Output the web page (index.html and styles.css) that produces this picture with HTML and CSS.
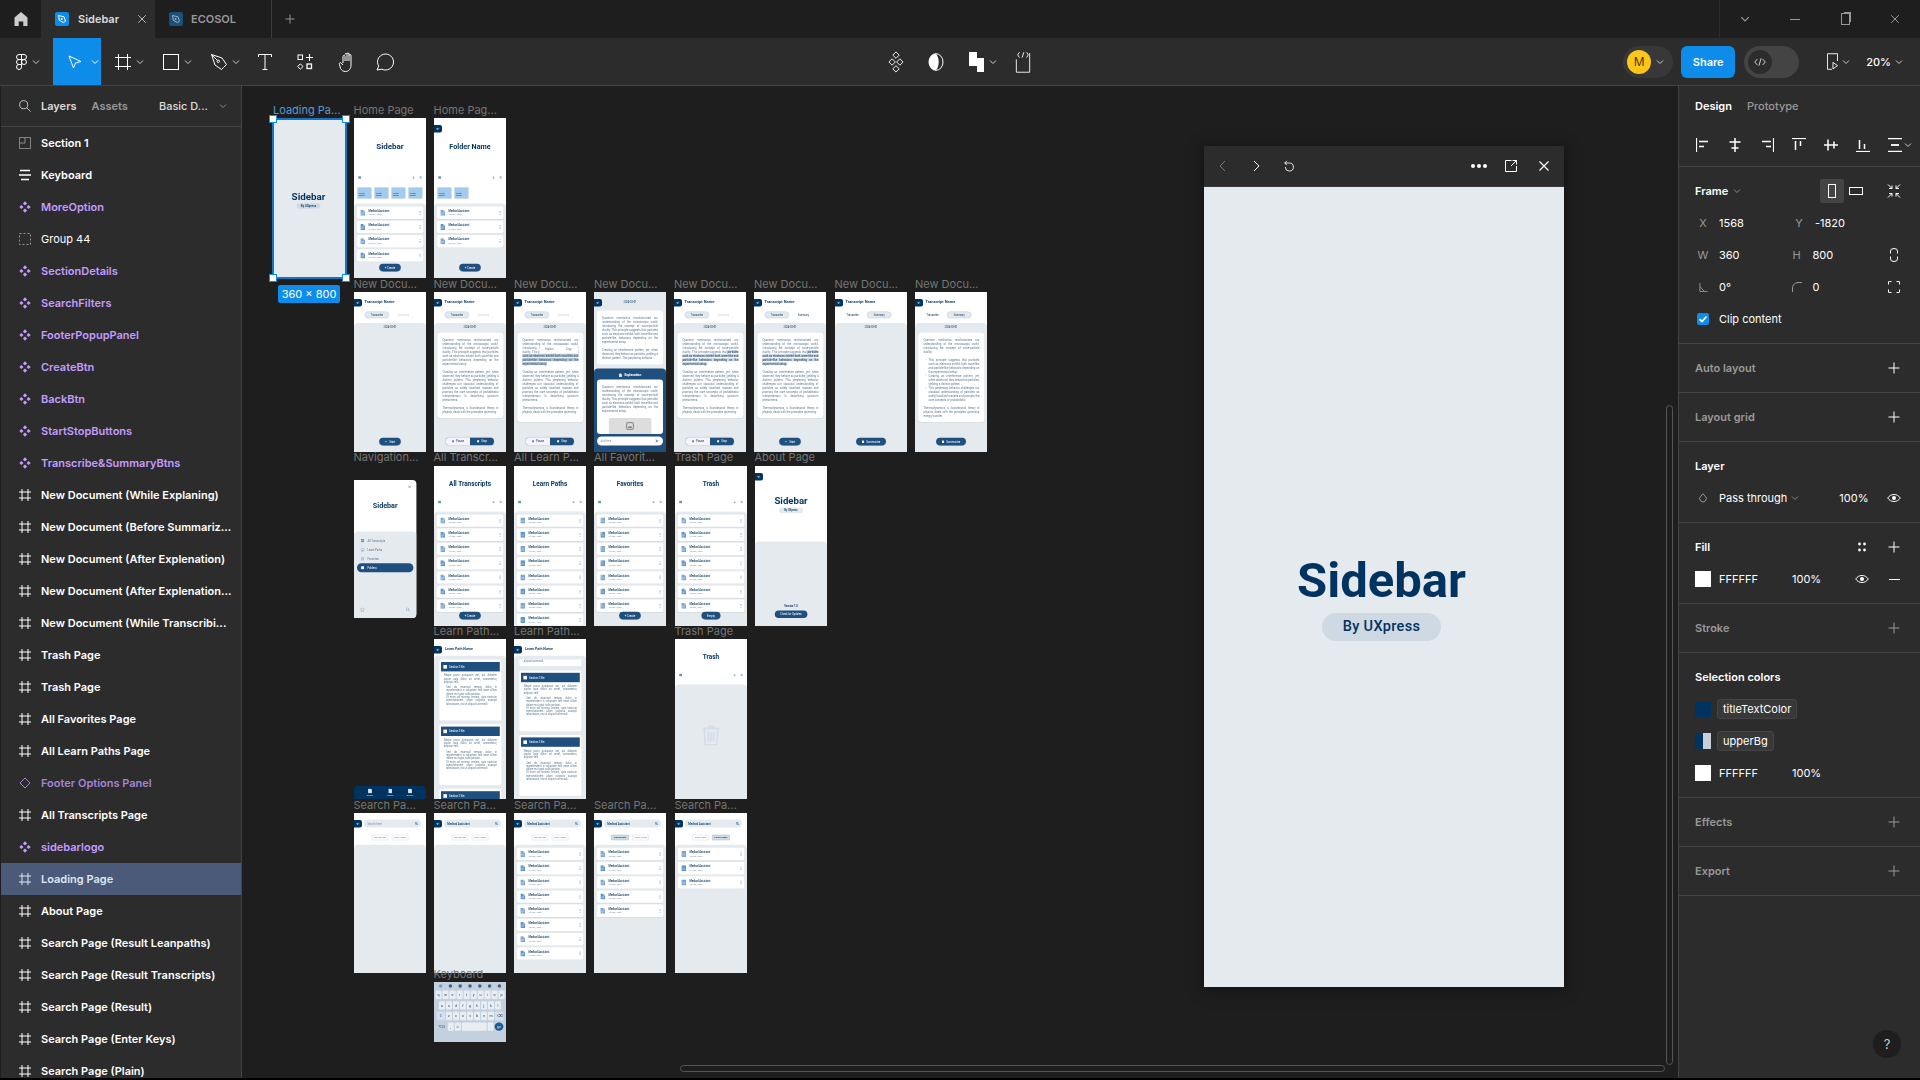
FILE: index.html
```html
<!DOCTYPE html>
<html lang="en">
<head>
  <meta charset="UTF-8">
  <title>Sidebar - Figma</title>
  <link rel="stylesheet" href="styles.css">
</head>
<body>
  <svg class="sprite" xmlns="http://www.w3.org/2000/svg">
    <symbol id="i-home" viewBox="0 0 16 16"><path d="M8 1 1.5 6.5V15h4.2v-4.5h4.6V15h4.2V6.5z" fill="currentColor"/></symbol>
    <symbol id="i-file" viewBox="0 0 14 14"><rect width="14" height="14" rx="2" fill="#0d8ce9"/><path d="M3.5 3.5 9 4.8l1.5 4.4-2.2 1.3-4-2.2z" fill="none" stroke="#fff"/><circle cx="6.6" cy="7" r="1" fill="#fff"/></symbol>
    <symbol id="i-file-dim" viewBox="0 0 14 14"><rect width="14" height="14" rx="2" fill="#1b5078"/><path d="M3.5 3.5 9 4.8l1.5 4.4-2.2 1.3-4-2.2z" fill="none" stroke="#9fb4c4"/><circle cx="6.6" cy="7" r="1" fill="#9fb4c4"/></symbol>
    <symbol id="i-x" viewBox="0 0 12 12"><path d="M1.5 1.5l9 9M10.5 1.5l-9 9" stroke="currentColor" stroke-width="1.2" fill="none"/></symbol>
    <symbol id="i-plus" viewBox="0 0 12 12"><path d="M6 .5v11M.5 6h11" stroke="currentColor" fill="none"/></symbol>
    <symbol id="i-chev" viewBox="0 0 8 8"><path d="M1 2.5 4 5.5 7 2.5" stroke="currentColor" fill="none"/></symbol>
    <symbol id="i-figma" viewBox="0 0 11 16"><path d="M5.500 .5H3a2.500 2.500 0 0 0 0 5h2.500zM5.500 .5H8a2.500 2.500 0 0 1 0 5H5.500zM5.500 5.500H3a2.500 2.500 0 0 0 0 5h2.500zM5.500 10.500H3a2.500 2.500 0 1 0 2.500 2.500z" fill="none" stroke="currentColor"/><circle cx="8" cy="8" r="2.500" fill="none" stroke="currentColor"/></symbol>
    <symbol id="i-move" viewBox="0 0 14 14"><path d="M1 1l12 5.500-5.500 1.500L5.500 13z" fill="none" stroke="currentColor"/></symbol>
    <symbol id="i-frame" viewBox="0 0 16 16"><path d="M3.500 0v16M12.500 0v16M0 3.500h16M0 12.500h16" fill="none" stroke="currentColor"/></symbol>
    <symbol id="i-rect" viewBox="0 0 16 16"><rect x=".5" y=".5" width="15" height="15" fill="none" stroke="currentColor"/></symbol>
    <symbol id="i-pen" viewBox="0 0 16 16"><path d="M.5 .5 11 4l4.500 6.500-3 3-2 2L4 11z" fill="none" stroke="currentColor"/><path d="M.5 .5 6.500 6.500" stroke="currentColor"/><circle cx="7.300" cy="7.300" r="1.200" fill="none" stroke="currentColor"/></symbol>
    <symbol id="i-text" viewBox="0 0 14 16"><path d="M.5 3V.5h13V3M7 .5v15M4.500 15.500h5" fill="none" stroke="currentColor"/></symbol>
    <symbol id="i-comps" viewBox="0 0 16 16"><rect x="1" y="1" width="4.500" height="4.500" fill="none" stroke="currentColor"/><path d="M12.500 0v7M9 3.500h7" stroke="currentColor"/><path d="M3.300 9.800 6 12.500l-2.700 2.700L.6 12.500z" fill="none" stroke="currentColor"/><rect x="10" y="10" width="4.500" height="4.500" fill="none" stroke="currentColor" stroke-width="1.300"/></symbol>
    <symbol id="i-hand" viewBox="0 0 18 20"><path d="M4.500 11V4.500a1 1 0 0 1 2 0V9m0-6.500a1 1 0 0 1 2 0V9m0-7a1 1 0 0 1 2 0v7m0-5.500a1 1 0 0 1 2 0V13c0 3.500-2 6.500-5.500 6.500-2.500 0-3.500-1-5-3L1 12.500c-.8-1.200.8-2.500 1.800-1.400L4.500 13" fill="none" stroke="currentColor" transform="translate(2.500 0)"/></symbol>
    <symbol id="i-comment" viewBox="0 0 18 18"><path d="M1 17l1.700-3.800A8 8 0 1 1 6 16.200z" fill="none" stroke="currentColor"/></symbol>
    <symbol id="i-diamonds" viewBox="0 0 16 24"><path d="M8 1l3.500 3.500L8 8 4.500 4.500zM8 16l3.500 3.500L8 23l-3.500-3.500zM3.800 8.500 7.300 12l-3.500 3.500L.3 12zM12.200 8.500l3.500 3.500-3.500 3.500L8.700 12z" fill="none" stroke="currentColor"/></symbol>
    <symbol id="i-mask" viewBox="0 0 16 18"><ellipse cx="8" cy="9" rx="7" ry="8.300" fill="none" stroke="currentColor"/><path d="M8 .7C4 .7 1 4.500 1 9s3 8.300 7 8.300c1.800-2 2.700-5 2.700-8.300S9.800 2.700 8 .7z" fill="currentColor"/></symbol>
    <symbol id="i-bool" viewBox="0 0 16 20"><path d="M1 0h8v6h7v14H9v-6H1z" fill="currentColor"/></symbol>
    <symbol id="i-dev" viewBox="0 0 18 24"><path d="M5 1 3 4l2 3M13 1l2 3-2 3M10 1 8 7" fill="none" stroke="currentColor"/><path d="M1.500 9v14.500h15V2" fill="none" stroke="currentColor"/></symbol>
    <symbol id="i-code" viewBox="0 0 16 12"><path d="M4.500 2 1 6l3.500 4M11.500 2 15 6l-3.500 4M9.500 1l-3 10" fill="none" stroke="currentColor"/></symbol>
    <symbol id="i-device" viewBox="0 0 12 18"><path d="M5.500 17.500H.5V.5h11v8" fill="none" stroke="currentColor"/><path d="M6.500 10v7l5-3.500z" fill="none" stroke="currentColor"/></symbol>
    <symbol id="i-search" viewBox="0 0 14 14"><circle cx="5.500" cy="5.500" r="4.700" fill="none" stroke="currentColor"/><path d="M9 9l4.500 4.500" stroke="currentColor"/></symbol>
    <symbol id="i-section" viewBox="0 0 14 14"><path d="M.5 .5h13v13H.5zM.5 7H7V.5" fill="none" stroke="currentColor"/></symbol>
    <symbol id="i-lines" viewBox="0 0 12 12"><path d="M1 1.500h10M0 6h12M2 10.500h8" stroke="currentColor" stroke-width="1.500" fill="none"/></symbol>
    <symbol id="i-comp" viewBox="0 0 12 12"><path d="M6 .3 8.100 2.400 6 4.500 3.900 2.400zM6 7.500l2.100 2.100L6 11.700 3.900 9.600zM2.400 3.900 4.500 6 2.400 8.100.3 6zM9.600 3.900 11.700 6 9.600 8.100 7.500 6z" fill="currentColor"/></symbol>
    <symbol id="i-compset" viewBox="0 0 12 12"><path d="M6 1l5 5-5 5-5-5z" fill="none" stroke="currentColor"/></symbol>
    <symbol id="i-group" viewBox="0 0 12 12"><rect x=".5" y=".5" width="11" height="11" fill="none" stroke="currentColor" stroke-dasharray="2 2"/></symbol>
    <symbol id="i-hash" viewBox="0 0 12 12"><path d="M3 0v12M9 0v12M0 3h12M0 9h12" fill="none" stroke="currentColor"/></symbol>
    <symbol id="i-prev" viewBox="0 0 10 12"><path d="M7 1 2 6l5 5" fill="none" stroke="currentColor"/></symbol>
    <symbol id="i-next" viewBox="0 0 10 12"><path d="M3 1l5 5-5 5" fill="none" stroke="currentColor"/></symbol>
    <symbol id="i-undo" viewBox="0 0 12 14"><path d="M3.500 1 1 3.500 3.500 6" fill="none" stroke="currentColor"/><path d="M1 3.500h5.500a4.700 4.700 0 1 1-4.800 4.700" fill="none" stroke="currentColor"/></symbol>
    <symbol id="i-open" viewBox="0 0 12 12"><path d="M6.500.5H.5v11h11V6M6 6 11.500 .5M7.500 .5h4v4" fill="none" stroke="currentColor"/></symbol>
    <symbol id="i-al" viewBox="0 0 14 14"><path d="M.5 0v14" fill="none" stroke="currentColor" stroke-width="1.200"/><path d="M3 3.500h9M3 8.500h5" stroke="currentColor" stroke-width="1.500"/></symbol>
    <symbol id="i-ac" viewBox="0 0 14 14"><path d="M7 0v14M1.500 4h11M3.500 10h7" fill="none" stroke="currentColor" stroke-width="1.500"/></symbol>
    <symbol id="i-ar" viewBox="0 0 14 14"><path d="M13.500 0v14" stroke="currentColor" stroke-width="1.200"/><path d="M2 3.500h9M6 8.500h5" stroke="currentColor" stroke-width="1.500"/></symbol>
    <symbol id="i-at" viewBox="0 0 14 14"><path d="M0 .5h14" stroke="currentColor" stroke-width="1.200"/><path d="M3.500 3v9M8.500 3v5" stroke="currentColor" stroke-width="1.500"/></symbol>
    <symbol id="i-am" viewBox="0 0 14 14"><path d="M0 7h14M4 1.500v11M10 3.500v7" stroke="currentColor" stroke-width="1.500"/></symbol>
    <symbol id="i-ab" viewBox="0 0 14 14"><path d="M0 13.500h14" stroke="currentColor" stroke-width="1.200"/><path d="M3.500 2v9M8.500 6v5" stroke="currentColor" stroke-width="1.500"/></symbol>
    <symbol id="i-dist" viewBox="0 0 14 14"><path d="M0 .7h14M0 13.300h14" stroke="currentColor" stroke-width="1.200"/><path d="M3 7h8" stroke="currentColor" stroke-width="1.800"/></symbol>
    <symbol id="i-fit" viewBox="0 0 14 14"><path d="M1 .5 5 4.500M5 1.500v3H2M13 .5 9 4.500M9 1.500v3h3M1 13.500l4-4M5 12.500v-3H2M13 13.500l-4-4M9 12.500v-3h3" fill="none" stroke="currentColor"/></symbol>
    <symbol id="i-angle" viewBox="0 0 10 10"><path d="M1 0v9.500h8.500M1 4l5 5.500" fill="none" stroke="currentColor"/></symbol>
    <symbol id="i-radius" viewBox="0 0 10 10"><path d="M.5 10V6C.5 3 3 .5 6 .5h4" fill="none" stroke="currentColor"/></symbol>
    <symbol id="i-link" viewBox="0 0 8 14"><path d="M.5 5.500V3a3.500 2.500 0 0 1 7 0v2.500M.5 8.500V11a3.500 2.500 0 0 0 7 0V8.500" fill="none" stroke="currentColor"/></symbol>
    <symbol id="i-corners" viewBox="0 0 12 12"><path d="M.5 3.500V1q0-.5.5-.5h2.500M8.500 .5H11q.5 0 .5.5v2.500M11.500 8.500V11q0 .5-.5.5H8.500M3.500 11.500H1q-.5 0-.5-.5V8.500" fill="none" stroke="currentColor"/></symbol>
    <symbol id="i-drop" viewBox="0 0 8 10"><path d="M4 .7 1.800 3.200a3.300 3.300 0 1 0 4.400 0z" fill="none" stroke="currentColor"/></symbol>
    <symbol id="i-eye" viewBox="0 0 14 8"><path d="M.7 4C2.500 1.500 4.500.5 7 .5s4.500 1 6.300 3.500C11.500 6.500 9.500 7.500 7 7.500S2.500 6.500.7 4z" fill="none" stroke="currentColor"/><circle cx="7" cy="4" r="2" fill="currentColor"/></symbol>
    <symbol id="i-styles" viewBox="0 0 10 10"><circle cx="2.500" cy="2" r="1.400" fill="currentColor"/><circle cx="7.500" cy="2" r="1.400" fill="currentColor"/><circle cx="2.500" cy="8" r="1.400" fill="currentColor"/><circle cx="7.500" cy="8" r="1.400" fill="currentColor"/></symbol>

    <symbol id="t-back" viewBox="0 0 16 16"><path d="M13 8H3M7.500 3.500 3 8l4.500 4.500" fill="none" stroke="currentColor" stroke-width="2"/></symbol>
    <symbol id="t-menu" viewBox="0 0 16 16"><path d="M1 2h14v3H1zM1 6.500h14v3H1zM1 11h14v3H1z" fill="currentColor"/></symbol>
    <symbol id="t-down" viewBox="0 0 16 16"><path d="M8 1v13M3 9l5 5 5-5" fill="none" stroke="currentColor" stroke-width="2"/></symbol>
    <symbol id="t-search" viewBox="0 0 16 16"><circle cx="6.500" cy="6.500" r="4.500" fill="none" stroke="currentColor" stroke-width="2"/><path d="M10 10l5 5" stroke="currentColor" stroke-width="2.500"/></symbol>
    <symbol id="t-doc" viewBox="0 0 24 30"><path d="M0 2q0-2 2-2h13l9 9v19q0 2-2 2H2q-2 0-2-2z" fill="currentColor"/><path d="M15 0v9h9z" fill="#d6e4f2"/><path d="M5 15h14M5 19h14M5 23h9" stroke="#fff" stroke-width="1.500"/></symbol>
    <symbol id="t-star" viewBox="0 0 24 30"><path d="M0 2q0-2 2-2h20q2 0 2 2v26q0 2-2 2H2q-2 0-2-2z" fill="currentColor"/><path d="M5 15h14M5 20h14" stroke="#fff" stroke-width="1.500"/><path d="M6 0l2 4 4 .6-3 3 .8 4.400L6 10l-3.800 2 .8-4.400-3-3 4-.6z" fill="#f5c542"/></symbol>
    <symbol id="t-book" viewBox="0 0 24 30"><path d="M0 2q0-2 2-2h20q2 0 2 2v26q0 2-2 2H2q-2 0-2-2z" fill="currentColor"/><path d="M5 15h14M5 20h14" stroke="#fff" stroke-width="1.500"/></symbol>
    <symbol id="t-trash" viewBox="0 0 92 105"><path d="M32 8h28M4 18h84M12 18l5 82h58l5-82M33 36v48M59 36v48M46 36v48" fill="none" stroke="currentColor" stroke-width="8"/></symbol>
    <symbol id="t-img" viewBox="0 0 24 24"><rect x="2" y="2" width="20" height="20" rx="2" fill="none" stroke="currentColor" stroke-width="2"/><path d="M6 17h12v-3H6z" fill="currentColor"/></symbol>
    <symbol id="t-send" viewBox="0 0 20 20"><path d="M2 2l16 8-16 8 3-8z" fill="currentColor"/></symbol>
    <symbol id="t-square" viewBox="0 0 16 16"><rect x="2" y="2" width="12" height="12" rx="1.500" fill="currentColor"/></symbol>
    <symbol id="t-pause" viewBox="0 0 16 16"><path d="M4 2h3v12H4zM9 2h3v12H9z" fill="currentColor"/></symbol>
    <symbol id="t-star-line" viewBox="0 0 16 16"><path d="M8 1l2.200 4.500 5 .7-3.600 3.500.9 5L8 12.300 3.500 14.700l.9-5L.8 6.200l5-.7z" fill="none" stroke="currentColor" stroke-width="1.500"/></symbol>
  </svg>

  <div class="app">
    <header class="titlebar">
      <div class="home-tab"><svg class="ico-16"><use href="#i-home"/></svg></div>
      <div class="tab tab-active">
        <svg class="ico-14"><use href="#i-file"/></svg>
        <span class="tab-name">Sidebar</span>
        <svg class="ico-10 tab-close"><use href="#i-x"/></svg>
      </div>
      <div class="tab">
        <svg class="ico-14"><use href="#i-file-dim"/></svg>
        <span class="tab-name tab-name-dim">ECOSOL</span>
      </div>
      <div class="tab-add"><svg class="ico-10"><use href="#i-plus"/></svg></div>
      <div class="win-controls">
        <svg class="ico-10 win-ico"><use href="#i-chev"/></svg>
        <span class="win-min"></span>
        <span class="win-restore"></span>
        <svg class="ico-10 win-ico"><use href="#i-x"/></svg>
      </div>
    </header>

    <div class="toolbar">
      <div class="tools">
        <button class="tool tool-main"><svg class="ico-logo"><use href="#i-figma"/></svg><svg class="ico-8"><use href="#i-chev"/></svg></button>
        <button class="tool tool-on"><svg class="ico-14"><use href="#i-move"/></svg><svg class="ico-8"><use href="#i-chev"/></svg></button>
        <button class="tool"><svg class="ico-16"><use href="#i-frame"/></svg><svg class="ico-8"><use href="#i-chev"/></svg></button>
        <button class="tool"><svg class="ico-16"><use href="#i-rect"/></svg><svg class="ico-8"><use href="#i-chev"/></svg></button>
        <button class="tool"><svg class="ico-16"><use href="#i-pen"/></svg><svg class="ico-8"><use href="#i-chev"/></svg></button>
        <button class="tool tool-plain"><svg class="ico-16"><use href="#i-text"/></svg></button>
        <button class="tool tool-plain"><svg class="ico-16"><use href="#i-comps"/></svg></button>
        <button class="tool tool-plain"><svg class="ico-20"><use href="#i-hand"/></svg></button>
        <button class="tool tool-plain"><svg class="ico-18"><use href="#i-comment"/></svg></button>
      </div>
      <div class="tools-mid">
        <svg class="ico-mid"><use href="#i-diamonds"/></svg>
        <svg class="ico-mid"><use href="#i-mask"/></svg>
        <span class="mid-bool"><svg class="ico-mid"><use href="#i-bool"/></svg><svg class="ico-8"><use href="#i-chev"/></svg></span>
        <svg class="ico-mid"><use href="#i-dev"/></svg>
      </div>
      <div class="tools-right">
        <div class="avatar-pill"><span class="avatar">M</span><svg class="ico-8"><use href="#i-chev"/></svg></div>
        <button class="share">Share</button>
        <div class="dev-toggle"><span class="dev-knob"><svg class="ico-12"><use href="#i-code"/></svg></span></div>
        <div class="device"><svg class="ico-device"><use href="#i-device"/></svg><svg class="ico-8"><use href="#i-chev"/></svg></div>
        <div class="zoom-level">20%<svg class="ico-8"><use href="#i-chev"/></svg></div>
      </div>
    </div>

    <main class="workspace">
      <aside class="layers">
        <div class="layers-head">
          <svg class="ico-12 layers-search"><use href="#i-search"/></svg>
          <span class="layers-tab">Layers</span>
          <span class="layers-tab layers-tab-dim">Assets</span>
          <span class="layers-page">Basic D...</span>
          <svg class="ico-8 layers-chev"><use href="#i-chev"/></svg>
        </div>
        <ul class="layer-list">
          <li class="layer"><svg class="layer-ico dim"><use href="#i-section"/></svg>Section 1</li>
          <li class="layer"><svg class="layer-ico"><use href="#i-lines"/></svg>Keyboard</li>
          <li class="layer comp"><svg class="layer-ico"><use href="#i-comp"/></svg>MoreOption</li>
          <li class="layer layer-light"><svg class="layer-ico dim"><use href="#i-group"/></svg>Group 44</li>
          <li class="layer comp"><svg class="layer-ico"><use href="#i-comp"/></svg>SectionDetails</li>
          <li class="layer comp"><svg class="layer-ico"><use href="#i-comp"/></svg>SearchFilters</li>
          <li class="layer comp"><svg class="layer-ico"><use href="#i-comp"/></svg>FooterPopupPanel</li>
          <li class="layer comp"><svg class="layer-ico"><use href="#i-comp"/></svg>CreateBtn</li>
          <li class="layer comp"><svg class="layer-ico"><use href="#i-comp"/></svg>BackBtn</li>
          <li class="layer comp"><svg class="layer-ico"><use href="#i-comp"/></svg>StartStopButtons</li>
          <li class="layer comp"><svg class="layer-ico"><use href="#i-comp"/></svg>Transcribe&amp;SummaryBtns</li>
          <li class="layer"><svg class="layer-ico"><use href="#i-hash"/></svg>New Document (While Explaning)</li>
          <li class="layer"><svg class="layer-ico"><use href="#i-hash"/></svg>New Document (Before Summariz...</li>
          <li class="layer"><svg class="layer-ico"><use href="#i-hash"/></svg>New Document (After Explenation)</li>
          <li class="layer"><svg class="layer-ico"><use href="#i-hash"/></svg>New Document (After Explenation...</li>
          <li class="layer"><svg class="layer-ico"><use href="#i-hash"/></svg>New Document (While Transcribi...</li>
          <li class="layer"><svg class="layer-ico"><use href="#i-hash"/></svg>Trash Page</li>
          <li class="layer"><svg class="layer-ico"><use href="#i-hash"/></svg>Trash Page</li>
          <li class="layer"><svg class="layer-ico"><use href="#i-hash"/></svg>All Favorites Page</li>
          <li class="layer"><svg class="layer-ico"><use href="#i-hash"/></svg>All Learn Paths Page</li>
          <li class="layer comp comp-set"><svg class="layer-ico"><use href="#i-compset"/></svg>Footer Options Panel</li>
          <li class="layer"><svg class="layer-ico"><use href="#i-hash"/></svg>All Transcripts Page</li>
          <li class="layer comp"><svg class="layer-ico"><use href="#i-comp"/></svg>sidebarlogo</li>
          <li class="layer layer-selected"><svg class="layer-ico"><use href="#i-hash"/></svg>Loading Page</li>
          <li class="layer"><svg class="layer-ico"><use href="#i-hash"/></svg>About Page</li>
          <li class="layer"><svg class="layer-ico"><use href="#i-hash"/></svg>Search Page (Result Leanpaths)</li>
          <li class="layer"><svg class="layer-ico"><use href="#i-hash"/></svg>Search Page (Result Transcripts)</li>
          <li class="layer"><svg class="layer-ico"><use href="#i-hash"/></svg>Search Page (Result)</li>
          <li class="layer"><svg class="layer-ico"><use href="#i-hash"/></svg>Search Page (Enter Keys)</li>
          <li class="layer"><svg class="layer-ico"><use href="#i-hash"/></svg>Search Page (Plain)</li>
        </ul>
      </aside>

      <section class="canvas" id="canvas">
        <!-- thumbnails get added here by script.js -->
        <div class="selection">
          <span class="handle handle-tl"></span>
          <span class="handle handle-tr"></span>
          <span class="handle handle-bl"></span>
          <span class="handle handle-br"></span>
          <span class="size-badge">360 × 800</span>
        </div>

        <div class="preview">
          <div class="preview-bar">
            <svg class="ico-12 preview-prev"><use href="#i-prev"/></svg>
            <svg class="ico-12"><use href="#i-next"/></svg>
            <svg class="ico-12"><use href="#i-undo"/></svg>
            <span class="preview-dots"><i></i><i></i><i></i></span>
            <svg class="ico-12"><use href="#i-open"/></svg>
            <svg class="ico-12"><use href="#i-x"/></svg>
          </div>
          <div class="preview-body">
            <div class="logo-title">Sidebar</div>
            <div class="logo-pill">By UXpress</div>
          </div>
        </div>

        <div class="scroll-x"></div>
        <div class="scroll-y"></div>
      </section>

      <aside class="props">
        <div class="props-tabs">
          <span class="props-tab">Design</span>
          <span class="props-tab props-tab-dim">Prototype</span>
        </div>
        <div class="align-row">
          <span class="cell"><svg class="ico-14"><use href="#i-al"/></svg></span>
          <span class="cell"><svg class="ico-14"><use href="#i-ac"/></svg></span>
          <span class="cell"><svg class="ico-14"><use href="#i-ar"/></svg></span>
          <span class="cell"><svg class="ico-14"><use href="#i-at"/></svg></span>
          <span class="cell"><svg class="ico-14"><use href="#i-am"/></svg></span>
          <span class="cell"><svg class="ico-14"><use href="#i-ab"/></svg></span>
          <span class="cell"><svg class="ico-14"><use href="#i-dist"/></svg><svg class="ico-8 dist-chev"><use href="#i-chev"/></svg></span>
        </div>

        <section class="panel panel-first">
          <div class="row">
            <span class="panel-title">Frame</span>
            <svg class="ico-8 frame-chev"><use href="#i-chev"/></svg>
            <span class="orient orient-on"><span class="orient-port"></span></span>
            <span class="orient"><span class="orient-land"></span></span>
            <span class="cell cell-end"><svg class="ico-14"><use href="#i-fit"/></svg></span>
          </div>
          <div class="row row-props">
            <span class="prop"><span class="prop-key">X</span>1568</span>
            <span class="prop"><span class="prop-key">Y</span>-1820</span>
          </div>
          <div class="row row-props">
            <span class="prop"><span class="prop-key">W</span>360</span>
            <span class="prop"><span class="prop-key">H</span>800</span>
            <span class="cell cell-end"><svg class="ico-14"><use href="#i-link"/></svg></span>
          </div>
          <div class="row row-props">
            <span class="prop"><span class="prop-key"><svg class="ico-8-plain"><use href="#i-angle"/></svg></span>0°</span>
            <span class="prop"><span class="prop-key"><svg class="ico-10"><use href="#i-radius"/></svg></span>0</span>
            <span class="cell cell-end"><svg class="ico-12"><use href="#i-corners"/></svg></span>
          </div>
          <div class="row row-clip">
            <span class="check"><svg viewBox="0 0 12 12"><path d="M2.500 6.200 5 8.500l4.500-5" fill="none" stroke="#fff" stroke-width="1.800"/></svg></span>
            Clip content
          </div>
        </section>

        <section class="panel">
          <div class="row"><span class="panel-title panel-title-dim">Auto layout</span><span class="cell cell-end"><svg class="ico-12"><use href="#i-plus"/></svg></span></div>
        </section>
        <section class="panel">
          <div class="row"><span class="panel-title panel-title-dim">Layout grid</span><span class="cell cell-end"><svg class="ico-12"><use href="#i-plus"/></svg></span></div>
        </section>
        <section class="panel">
          <div class="row"><span class="panel-title">Layer</span></div>
          <div class="row row-props">
            <span class="prop-key"><svg class="ico-10"><use href="#i-drop"/></svg></span>
            <span>Pass through</span>
            <svg class="ico-8 layer-chev"><use href="#i-chev"/></svg>
            <span class="layer-opacity">100%</span>
            <span class="cell cell-end"><svg class="ico-eye"><use href="#i-eye"/></svg></span>
          </div>
        </section>
        <section class="panel">
          <div class="row">
            <span class="panel-title">Fill</span>
            <span class="cell cell-auto"><svg class="ico-10"><use href="#i-styles"/></svg></span>
            <span class="cell"><svg class="ico-12"><use href="#i-plus"/></svg></span>
          </div>
          <div class="row">
            <span class="swatch"></span>
            <span class="hex">FFFFFF</span>
            <span class="pct">100%</span>
            <span class="cell cell-auto"><svg class="ico-eye"><use href="#i-eye"/></svg></span>
            <span class="cell"><span class="minus"></span></span>
          </div>
        </section>
        <section class="panel">
          <div class="row"><span class="panel-title panel-title-dim">Stroke</span><span class="cell cell-end"><svg class="ico-12 dim"><use href="#i-plus"/></svg></span></div>
        </section>
        <section class="panel">
          <div class="row"><span class="panel-title">Selection colors</span></div>
          <div class="row">
            <span class="swatch swatch-navy"></span>
            <span class="style-chip">titleTextColor</span>
          </div>
          <div class="row">
            <span class="swatch swatch-half"></span>
            <span class="style-chip">upperBg</span>
          </div>
          <div class="row">
            <span class="swatch"></span>
            <span class="hex">FFFFFF</span>
            <span class="pct">100%</span>
          </div>
        </section>
        <section class="panel">
          <div class="row"><span class="panel-title panel-title-dim">Effects</span><span class="cell cell-end"><svg class="ico-12 dim"><use href="#i-plus"/></svg></span></div>
        </section>
        <section class="panel">
          <div class="row"><span class="panel-title panel-title-dim">Export</span><span class="cell cell-end"><svg class="ico-12 dim"><use href="#i-plus"/></svg></span></div>
        </section>
        <div class="help">?</div>
      </aside>
    </main>
  </div>

  <script src="script.js"></script>
</body>
</html>
```
FILE: styles.css
```css
* { box-sizing: border-box; }
html, body { margin: 0; height: 100%; background: #000; overflow: hidden; }
body { font-family: Inter, "Noto Sans", sans-serif; font-size: 11px; color: #fff; }
ul { list-style: none; margin: 0; padding: 0; }
button { font: inherit; color: inherit; border: 0; background: none; padding: 0; }
svg { display: block; flex: none; }
.sprite { position: absolute; width: 0; height: 0; }

.ico-8 { width: 8px; height: 8px; color: #ccc; }
.ico-8-plain { width: 9px; height: 9px; }
.ico-10 { width: 10px; height: 10px; }
.ico-12 { width: 12px; height: 12px; }
.ico-14 { width: 14px; height: 14px; }
.ico-16 { width: 16px; height: 16px; }
.ico-18 { width: 18px; height: 18px; }
.ico-20 { width: 18px; height: 20px; }
.ico-logo { width: 11px; height: 16px; }
.ico-mid { width: 16px; height: 22px; }
.ico-device { width: 11px; height: 17px; }
.ico-eye { width: 14px; height: 8px; }
.dim { color: #999; }

.app { height: 1078px; display: flex; flex-direction: column; }

/* title bar */
.titlebar { height: 38px; background: #1e1e1e; display: flex; align-items: stretch; flex: none; }
.home-tab { width: 41px; display: flex; align-items: center; justify-content: center; color: #ccc; }
.tab { width: 117px; padding-left: 14px; display: flex; align-items: center; gap: 8px; border-right: 1px solid #3a3a3a; }
.tab-active { width: 114px; background: #2c2c2c; border-right: 0; gap: 9px; }
.tab-name { font-size: 11px; font-weight: 600; color: #ddd; }
.tab-name-dim { color: #999; }
.tab-close { margin-left: 9px; color: #bbb; }
.tab-add { width: 36px; display: flex; align-items: center; justify-content: center; color: #aaa; }
.win-controls { margin-left: auto; width: 201px; border-left: 1px solid #2c2c2c; display: flex; align-items: center; justify-content: space-between; padding: 0 20px; color: #999; }
.win-min { width: 10px; height: 1px; background: #999; }
.win-restore { width: 9px; height: 12px; border: 1px solid #999; box-shadow: 2px -2px 0 -1px #999; }

/* tool bar */
.toolbar { height: 48px; background: #2c2c2c; border-bottom: 1px solid #444; display: flex; flex: none; position: relative; }
.tools { display: flex; }
.tool { width: 48px; height: 47px; display: flex; align-items: center; gap: 5px; padding-left: 14px; }
.tool-main { width: 53px; padding-left: 16px; }
.tool-on { background: #0d8ce9; padding-left: 15px; gap: 9px; color: #fff; }
.tool-on .ico-8 { color: #fff; }
.tool-plain { width: 40px; padding: 0; justify-content: center; }
.tools-mid { margin-left: 483px; display: flex; align-items: center; gap: 24px; }
.mid-bool { display: flex; align-items: center; gap: 5px; margin-right: -6px; }
.tools-right { margin-left: auto; display: flex; align-items: center; padding-right: 17px; }
.avatar-pill { width: 50px; height: 32px; background: #383838; border-radius: 16px; display: flex; align-items: center; gap: 5px; padding-left: 4px; }
.avatar { width: 24px; height: 24px; border-radius: 50%; background: #ffc61a; color: #4a3a00; font-size: 12px; display: flex; align-items: center; justify-content: center; }
.share { width: 54px; height: 32px; margin-left: 8px; background: #0d8ce9; border-radius: 6px; font-size: 11px; font-weight: 600; }
.dev-toggle { width: 55px; height: 32px; margin-left: 9px; background: #444; border-radius: 16px; padding: 4px; }
.dev-knob { width: 24px; height: 24px; border-radius: 50%; background: #2c2c2c; display: flex; align-items: center; justify-content: center; }
.device { display: flex; align-items: center; gap: 4px; margin-left: 28px; }
.zoom-level { display: flex; align-items: center; gap: 4px; margin-left: 16px; font-weight: 500; }

/* main area */
.workspace { flex: 1; display: flex; min-height: 0; }

.layers { width: 242px; flex: none; background: #2c2c2c; border-left: 1px solid #1e1e1e; border-right: 1px solid #444; overflow: hidden; }
.layers-head { height: 41px; border-bottom: 1px solid #444; display: flex; align-items: center; padding-left: 18px; color: #ddd; }
.layers-tab { font-weight: 600; margin-left: 10px; }
.layers-tab-dim { color: #999; margin-left: 15px; }
.layers-page { margin-left: 31px; font-weight: 500; }
.layers-chev { margin-left: 11px; color: #888; }
.layer { height: 32px; display: flex; align-items: center; padding-left: 18px; font-weight: 600; white-space: nowrap; color: #fff; }
.layer-light { font-weight: 400; }
.layer-ico { width: 12px; height: 12px; margin-right: 10px; }
.comp { color: #c49cff; }
.comp-set { color: #a583d8; }
.layer-selected { background: #4a5a78; color: #dfe6f2; }

.canvas { flex: 1; background: #1e1e1e; position: relative; overflow: hidden; }
.label { position: absolute; width: 80px; font-size: 11px; line-height: 14px; color: #757575; white-space: nowrap; }
.label-on { color: #5a9ad0; }

.selection { position: absolute; left: 30px; top: 32px; width: 75px; height: 161px; border: 2px solid #1577c4; }
.handle { position: absolute; width: 8px; height: 8px; background: #fff; border: 1px solid #0d8ce9; }
.handle-tl { left: -5px; top: -5px; }
.handle-tr { right: -5px; top: -5px; }
.handle-bl { left: -5px; bottom: -5px; }
.handle-br { right: -5px; bottom: -5px; }
.size-badge { position: absolute; left: 4px; top: 165px; width: 62px; height: 18px; border-radius: 2px; background: #0d8ce9; color: #fff; font-size: 11px; line-height: 18px; text-align: center; white-space: nowrap; }

.preview { position: absolute; left: 962px; top: 60px; width: 360px; height: 841px; box-shadow: 0 2px 14px rgba(0,0,0,.5); }
.preview-bar { height: 41px; background: #2c2c2c; display: flex; align-items: center; gap: 21px; padding: 0 14px 0 13px; border-bottom: 1px solid #3a3a3a; }
.preview-prev { color: #777; }
.preview-dots { margin-left: auto; margin-right: -3px; display: flex; gap: 2px; }
.preview-dots i { width: 4px; height: 4px; background: #fff; border-radius: 50%; }
.preview-body { height: 800px; background: #e5eaef; display: flex; flex-direction: column; align-items: center; justify-content: center; padding: 18px 5px 0 0; }
.logo-title { font: 700 49px/58px Roboto, sans-serif; color: #00335f; }
.logo-pill { width: 119px; height: 28px; margin-top: 3px; border-radius: 14px; background: #cfd9e3; color: #00335f; font: 500 14.500px/28px Roboto, sans-serif; letter-spacing: .3px; text-align: center; }

.scroll-x { position: absolute; left: 438px; top: 979px; width: 985px; height: 7px; border: 1px solid #555; border-radius: 4px; }
.scroll-y { position: absolute; left: 1424px; top: 319px; width: 7px; height: 660px; border: 1px solid #555; border-radius: 4px; }

/* right panel */
.props { width: 242px; flex: none; background: #2c2c2c; border-left: 1px solid #444; position: relative; overflow: hidden; }
.props-tabs { height: 32px; padding: 8px 0 0 16px; display: flex; gap: 15px; line-height: 24px; }
.props-tab { font-weight: 600; }
.props-tab-dim { font-weight: 500; color: #999; }
.align-row { height: 49px; padding: 6px 0 0 8px; display: flex; align-items: center; border-bottom: 1px solid #444; }
.cell { width: 32px; height: 32px; display: flex; align-items: center; justify-content: center; flex: none; }
.cell-end { margin-left: auto; }
.cell-auto { margin-left: auto; }
.dist-chev { position: absolute; right: 8px; }
.panel { padding: 8px 10px 8px 16px; border-bottom: 1px solid #444; }
.row { height: 32px; display: flex; align-items: center; }
.row-props { margin-left: -4px; }
.panel-title { font-weight: 600; }
.panel-title-dim { color: #999; }
.frame-chev { margin-left: 5px; color: #888; }
.orient { width: 24px; height: 24px; border-radius: 2px; display: flex; align-items: center; justify-content: center; }
.orient-on { background: #444; margin-left: 79px; }
.orient-port { width: 8px; height: 14px; border: 1px solid #fff; }
.orient-land { width: 14px; height: 8px; border: 1px solid #fff; }
.prop { width: 96px; display: flex; align-items: center; }
.prop-key { width: 24px; margin-right: 4px; color: #999; display: flex; justify-content: center; }
.row-clip { gap: 10px; padding-left: 2px; }
.check { width: 12px; height: 12px; background: #0d8ce9; border-radius: 2px; }
.layer-chev { margin-left: 4px; color: #888; }
.layer-opacity { margin-left: 40px; }
.swatch { width: 16px; height: 16px; background: #fff; flex: none; }
.swatch-navy { background: #00335f; }
.swatch-half { background: linear-gradient(90deg, #00335f 50%, #c8cfd6 50%); }
.hex { margin-left: 8px; width: 73px; }
.minus { width: 11px; height: 1px; background: #fff; }
.style-chip { margin-left: 6px; height: 20px; line-height: 18px; padding: 0 5px; border: 1px solid #444; border-radius: 3px; background: #383838; }
.help { position: absolute; left: 194px; top: 944px; width: 28px; height: 28px; border-radius: 50%; background: #1e1e1e; text-align: center; line-height: 28px; font-size: 13px; color: #ccc; }

/* thumbnails: drawn at 360 wide, shown at 20% */
.thumb { position: absolute; width: 360px; height: 800px; background: #fff; overflow: hidden; transform: scale(.2); transform-origin: 0 0; filter: blur(1.200px); font-family: Roboto, sans-serif; color: #00335f; display: flex; flex-direction: column; }
.thumb-grey { background: #e5eaef; }
.back { position: absolute; left: 0; top: 35px; width: 40px; height: 37px; background: #00335f; color: #fff; border-radius: 0 10px 10px 0; display: flex; align-items: center; justify-content: center; z-index: 2; }
.back svg { width: 20px; height: 20px; }
.big-title { font-weight: 700; text-align: center; flex: none; }
.home-title { height: 280px; padding-top: 120px; font-size: 40px; line-height: 46px; }
.home-title-sm { font-size: 36px; }
.list-title { height: 163px; padding-top: 67px; font-size: 32px; line-height: 46px; }
.list-bar { height: 34px; padding: 0 18px 0 20px; display: flex; align-items: center; gap: 20px; color: #3f6b97; flex: none; }
.list-bar svg { width: 16px; height: 16px; }
.list-bar svg:first-child { margin-right: auto; }
.folders { display: flex; gap: 17px; padding: 33px 18px 26px; flex: none; }
.folder { width: 68px; height: 55px; background: #a3caef; border-radius: 4px; box-shadow: 0 2px 4px rgba(0,0,0,.12); font-size: 11px; line-height: 12px; padding: 24px 6px 0; }
.sheet { flex: 1; background: #e5eaef; border-radius: 20px 20px 0 0; padding: 15px 13px; display: flex; flex-direction: column; gap: 9px; overflow: hidden; }
.sheet-gap { margin-top: 30px; }
.sheet-path { outline: 6px solid #e9f2fb; outline-offset: -6px; }
.card { height: 62px; flex: none; background: #fff; border-radius: 8px; display: flex; align-items: center; padding: 0 15px 0 19px; gap: 16px; box-shadow: 0 2px 4px rgba(0,0,0,.06); }
.card-ico { width: 24px; height: 30px; color: #7aa5d2; }
.card-ico-dark { color: #5f94c9; }
.card-text { flex: 1; display: flex; flex-direction: column; gap: 3px; }
.card-text b { font-size: 13px; line-height: 16px; font-weight: 500; }
.card-text span { font-size: 11px; line-height: 13px; color: #7d92a6; }
.kebab { display: flex; flex-direction: column; gap: 3px; }
.kebab i { width: 4px; height: 4px; border-radius: 50%; background: #00335f; }

.action { position: absolute; left: 50%; bottom: 33px; transform: translateX(-50%); height: 38px; padding: 0 28px; border-radius: 19px; background: #1f4f7f; color: #fff; font-size: 14px; line-height: 38px; white-space: nowrap; box-shadow: 0 2px 4px rgba(0,0,0,.2); display: flex; align-items: center; gap: 8px; }
.action svg { width: 14px; height: 14px; }
.split { position: absolute; left: 57px; bottom: 33px; width: 243px; height: 40px; display: flex; border-radius: 20px; overflow: hidden; box-shadow: 0 1px 4px rgba(0,0,0,.25); font-size: 14px; }
.split span { flex: 1; display: flex; align-items: center; justify-content: center; gap: 8px; }
.split svg { width: 14px; height: 14px; }
.split-pause { background: #f6f1fb; border: 2px solid #90a8c0; border-right: 0; border-radius: 20px 0 0 20px; }
.split-stop { background: #1f4f7f; color: #fff; }

.doc-title { height: 98px; padding: 35px 0 0 52px; font-size: 20px; font-weight: 600; line-height: 30px; flex: none; }
.tabs { height: 33px; padding-left: 53px; display: flex; gap: 37px; font-size: 13px; align-items: center; flex: none; }
.tab-pill { width: 122px; height: 33px; border-radius: 17px; background: #e5eaef; border: 2px solid #a9bdd1; text-align: center; line-height: 29px; }
.tab-plain { width: 70px; text-align: center; }
.tab-faded { color: #c4d0db; }
.doc-sheet { flex: 1; margin-top: 24px; background: #e5eaef; border-radius: 20px 20px 0 0; padding-top: 10px; overflow: hidden; }
.doc-date { text-align: center; font-size: 13px; line-height: 24px; }
.paper { margin: 13px 13px 0 17px; padding: 26px 25px 22px; background: #fff; border-radius: 16px; font-size: 14px; line-height: 20px; color: #5f7a92; text-align: justify; box-shadow: 0 2px 4px rgba(0,0,0,.05); position: relative; }
.paper p { margin: 0 0 20px; }
.paper p:last-child { margin-bottom: 0; }
.paper ul { margin: 0 0 20px 14px; padding-left: 12px; list-style: disc; }
.paper mark { background: #b4c4d6; color: #3c5870; }
.paper .strong { background: #d3dce6; color: #33506c; font-weight: 500; }
.popover { position: absolute; left: 110px; top: 64px; width: 195px; height: 42px; background: #fff; border-radius: 6px; box-shadow: 0 1px 6px rgba(0,0,0,.3); display: flex; align-items: center; font-size: 13px; }
.popover span { flex: 1; text-align: center; }

.expl-date { height: 93px; padding-top: 38px; text-align: center; font-size: 13px; line-height: 24px; flex: none; }
.expl-top { margin: 0 15px; height: 269px; overflow: hidden; background: #fff; border-radius: 16px; padding: 26px 25px; font-size: 14px; line-height: 20px; color: #5f7a92; text-align: justify; flex: none; }
.expl-top p { margin: 0 0 20px; }
.expl-panel { margin-top: 20px; flex: 1; background: #1f4f7f; border-radius: 20px 20px 0 0; padding-top: 12px; }
.expl-head { height: 43px; color: #fff; font-size: 16px; font-weight: 700; display: flex; align-items: center; justify-content: center; gap: 12px; }
.expl-head svg { width: 16px; height: 20px; color: #cfe0f0; }
.expl-body { margin: 0 15px; height: 273px; background: #fff; border-radius: 16px; padding: 26px 25px 0; font-size: 14px; line-height: 20px; color: #5f7a92; text-align: justify; display: flex; flex-direction: column; }
.expl-img { margin: auto auto 0; width: 213px; height: 80px; flex: none; background: #ddd; border-radius: 8px 8px 0 0; display: flex; align-items: center; justify-content: center; color: #555; }
.expl-img svg { width: 40px; height: 40px; }
.ask { margin: 12px 15px 0; height: 46px; border-radius: 23px; background: #fff; padding: 0 18px; font-size: 13px; color: #8298ac; display: flex; align-items: center; justify-content: space-between; }
.ask svg { width: 22px; height: 22px; color: #7d98b3; }

.about-head { height: 378px; flex: none; }
.about-title { padding-top: 146px; font-size: 48px; line-height: 58px; }
.about-pill { margin: 4px auto 0; width: 119px; height: 28px; border-radius: 14px; background: #e5eaef; font-size: 13px; line-height: 28px; text-align: center; font-weight: 500; }
.about-sheet { flex: 1; background: #e5eaef; border-radius: 20px 20px 0 0; display: flex; flex-direction: column; align-items: center; justify-content: flex-end; padding-bottom: 40px; font-size: 13px; font-weight: 700; }
.about-btn { margin-top: 14px; width: 163px; height: 38px; border-radius: 19px; background: #1f4f7f; color: #fff; font-size: 13px; font-weight: 400; line-height: 38px; text-align: center; }

.nav-thumb { width: 312px; height: 690px; border-radius: 0 20px 20px 0; }
.nav-close { position: absolute; right: 24px; top: 24px; width: 20px; height: 20px; color: #444; }
.nav-title { height: 258px; padding-top: 105px; font-size: 36px; line-height: 46px; }
.nav-sheet { flex: 1; background: #e5eaef; border-radius: 20px 20px 0 0; padding-top: 23px; display: flex; flex-direction: column; }
.nav-item { height: 45px; margin: 0 15px; padding-left: 18px; border-radius: 23px; display: flex; align-items: center; gap: 14px; font-size: 14px; color: #5f7a92; flex: none; }
.nav-item svg { width: 20px; height: 20px; color: #4b7aa8; }
.nav-item-on { background: #1f4f7f; color: #fff; }
.nav-item-on svg { color: #fff; }
.nav-foot { margin-top: auto; padding: 0 30px 30px; display: flex; justify-content: space-between; color: #8ea4b9; }
.nav-foot svg { width: 24px; height: 24px; }

.footer-thumb { height: 65px; background: #00335f; border-radius: 20px 20px 0 0; color: #cfe0f0; flex-direction: row; justify-content: space-around; align-items: center; padding: 0 30px; }
.footer-item { display: flex; flex-direction: column; align-items: center; font-size: 11px; gap: 3px; }
.footer-item svg { width: 20px; height: 24px; }

.path-title { height: 83px; padding: 35px 0 0 55px; background: #fff; font-size: 18px; font-weight: 600; line-height: 30px; flex: none; position: relative; z-index: 1; }
.path-sheet { flex: 1; background: #e5eaef; border-radius: 20px 20px 0 0; padding: 20px 23px 0 27px; overflow: hidden; }
.path-card { height: 304px; margin-bottom: 19px; background: #fff; border-radius: 8px; padding: 12px 8px 0; }
.path-card-end { height: 32px; margin-bottom: 22px; border-radius: 0 0 8px 8px; padding: 0 22px; font-size: 13px; line-height: 16px; color: #5f7a92; }
.path-head { height: 47px; background: #1f4f7f; color: #fff; font-size: 14px; display: flex; align-items: center; gap: 10px; padding-left: 12px; }
.path-head i { width: 18px; height: 18px; background: #fff; }
.path-text { padding: 12px 14px 0; font-size: 13px; line-height: 16.500px; color: #5f7a92; text-align: justify; }
.path-text p { margin: 0 0 10px; }
.path-text ul { margin: 0; padding-left: 12px; }

.trash-sheet { align-items: center; justify-content: center; padding-bottom: 80px; }
.trash-ico { width: 92px; height: 105px; color: #d3dde7; }

.search-row { height: 39px; margin: 33px 25px 0 48px; border-radius: 20px; background: #e5eaef; padding: 0 14px 0 18px; font-size: 14px; font-weight: 500; display: flex; align-items: center; justify-content: space-between; flex: none; }
.search-row svg { width: 18px; height: 18px; }
.search-hint { color: #8298ac; font-weight: 400; }
.chips { height: 27px; margin-top: 37px; display: flex; justify-content: center; gap: 18px; font-size: 12px; flex: none; }
.chip { width: 82px; border: 2px solid #c6d2dd; text-align: center; line-height: 23px; border-radius: 2px; color: #5f7a92; }
.chip-on { background: #d3dde7; border-color: #96abbf; color: #00335f; font-weight: 700; width: 88px; }
.search-sheet { margin-top: 23px; }

.kbd-thumb { height: 300px; background: #c3d0de; color: #22405c; font-size: 18px; padding-top: 8px; gap: 11px; }
.kbd-tools { height: 24px; display: flex; justify-content: space-around; align-items: center; padding: 0 8px; color: #42627f; flex: none; }
.kbd-tools i { width: 18px; height: 18px; border-radius: 50%; background: currentColor; }
.kbd-tools .kbd-first { background: #6d9fd6; }
.kbd-row { display: flex; justify-content: center; gap: 5px; flex: none; }
.key { width: 30px; height: 42px; background: #e9eef3; border-radius: 5px; display: flex; align-items: center; justify-content: center; }
.key-mod { width: 42px; background: #d5e1f2; }
.key-fn { width: 50px; background: none; font-size: 15px; }
.key-space { width: 124px; }
.key-enter { width: 44px; border-radius: 50%; background: #1f5a93; color: #fff; font-size: 14px; }
```
FILE: script.js
```js
// thumbnails on the canvas. coords are page px, canvas starts at 242,86
const canvas = document.getElementById("canvas");
const selection = canvas.querySelector(".selection");
const ORIGIN_X = 242;
const ORIGIN_Y = 86;

const P1 = "Quantum mechanics revolutionized our understanding of the microscopic world, introducing the concept of wave-particle duality. This principle suggests that ";
const P1B = "particles such as electrons exhibit both wave-like and particle-like behaviors depending on the experimental setup.";
const P2 = "Creating an interference pattern, yet, when observed, they behave as particles, yielding a distinct pattern. This perplexing behavior challenges our classical understanding of particles as solely localized masses and prompts the core concepts of probabilistic interpretations in describing quantum phenomena.";
const P3 = "Thermodynamics, a foundational theory in physics, deals with the principles governing.";
const LOREM = "Neque porro quisquam est, qui dolorem ipsum quia dolor sit amet, consectetur, adipisci velit.";
const LOREM_A = "Sed do eiusmod tempor dolor in reprehenderit in voluptate velit esse cillum dolore eu fugiat nulla pariatur.";
const LOREM_B = "Ut enim ad minima veniam, quis nostrum exercitationem ullam corporis suscipit laboriosam, nisi ut aliquid commodi.";

function icon(name, cls) {
  return `<svg class="${cls || ""}"><use href="#${name}"/></svg>`;
}

const back = `<div class="back">${icon("t-back")}</div>`;
const kebab = '<span class="kebab"><i></i><i></i><i></i></span>';

function card(ico, i) {
  const dark = i % 2 ? " card-ico-dark" : "";
  return `<div class="card">${icon(ico, "card-ico" + dark)}
    <div class="card-text"><b>Medical Assistant</b><span>${20 + i} May, 2025</span></div>${kebab}</div>`;
}

function cards(n, ico) {
  let out = "";
  for (let i = 0; i < n; i++) out += card(ico || "t-doc", i);
  return out;
}

const listBar = `<div class="list-bar">${icon("t-menu")}${icon("t-down")}${icon("t-search")}</div>`;

function homePage(title, folders, n, small) {
  const fs = Array(folders).fill('<div class="folder">Folder Name</div>').join("");
  return (small ? back : "") +
    `<div class="big-title home-title${small ? " home-title-sm" : ""}">${title}</div>${listBar}
    <div class="folders">${fs}</div>
    <div class="sheet">${cards(n)}</div>
    <div class="action">+ Create</div>`;
}

function listPage(title, n, ico, btn, sheetCls) {
  return `<div class="big-title list-title">${title}</div>${listBar}
    <div class="sheet sheet-gap ${sheetCls || ""}">${cards(n, ico)}</div>${btn ? `<div class="action">${btn}</div>` : ""}`;
}

function paper(kind) {
  let first = P1 + P1B;
  if (kind === "mark") first = `${P1}<mark>${P1B}</mark>`;
  if (kind === "strong") first = `${P1}<span class="strong">${P1B}</span>`;
  const pop = kind === "mark" ? '<div class="popover"><span>Explain</span><span>Copy</span></div>' : "";
  return `<div class="paper"><p>${first}</p><p>${P2}</p><p>${P3}</p>${pop}</div>`;
}

const summary = `<div class="paper"><p>Quantum mechanics revolutionizes our understanding of the microscopic world, introducing the concept of wave-particle duality.</p>
  <ul><li>This principle suggests that particles such as electrons exhibit both wave-like and particle-like behaviors depending on the experimental setup.</li>
  <li>Creating an interference pattern, yet, when observed, they behave as particles, yielding a distinct pattern.</li>
  <li>This perplexing behavior challenges our classical understanding of particles as solely localized masses and prompts the core concepts of probabilistic.</li></ul>
  <p>Thermodynamics, a foundational theory in physics, deals with the principles governing energy transfer.</p></div>`;

const pauseStop = `<div class="split"><span class="split-pause">${icon("t-pause")}Pause</span><span class="split-stop">${icon("t-square")}Stop</span></div>`;
const startBtn = `<div class="action">${icon("t-back")}Start</div>`;
const summarizeBtn = `<div class="action">${icon("t-doc")}Summarize</div>`;

function docPage(body, btn, summaryOn, fade) {
  const tabs = summaryOn
    ? '<span class="tab-plain">Transcribe</span><span class="tab-pill">Summary</span>'
    : `<span class="tab-pill">Transcribe</span><span class="tab-plain${fade ? " tab-faded" : ""}">Summary</span>`;
  return `${back}<div class="doc-title">Transcript Name</div><div class="tabs">${tabs}</div>
    <div class="doc-sheet"><div class="doc-date">2024-03-01</div>${body}</div>${btn}`;
}

const explanation = `${back}<div class="expl-date">2024-03-01</div>
  <div class="expl-top"><p>${P1 + P1B}</p><p>Creating an interference pattern, yet, when observed, they behave as particles, yielding a distinct pattern. This perplexing behavior...</p></div>
  <div class="expl-panel"><div class="expl-head">${icon("t-doc")}Explanation</div>
    <div class="expl-body"><div>${P1 + P1B}</div><div class="expl-img">${icon("t-img")}</div></div>
    <div class="ask">Ask Here...${icon("t-send")}</div></div>`;

function navItem(name, ico, on) {
  return `<div class="nav-item${on ? " nav-item-on" : ""}">${icon(ico)}${name}</div>`;
}

const navigation = `${icon("i-x", "nav-close")}<div class="big-title nav-title">Sidebar</div>
  <div class="nav-sheet">
    ${navItem("All Transcripts", "t-menu")}${navItem("Learn Paths", "t-img")}${navItem("Favorites", "t-star-line")}${navItem("Folders", "t-square", true)}
    <div class="nav-foot">${icon("t-star-line")}${icon("t-search")}</div>
  </div>`;

const about = `${back}<div class="about-head"><div class="big-title about-title">Sidebar</div><div class="about-pill">By UXpress</div></div>
  <div class="about-sheet">Version 1.0<div class="about-btn">Check for Updates</div></div>`;

const pathCard = `<div class="path-card"><div class="path-head"><i></i>Section Title</div>
  <div class="path-text"><p>${LOREM}</p><ul><li>${LOREM_A}</li><li>${LOREM_B}</li></ul></div></div>`;

function pathPage(scrolled) {
  const tail = scrolled ? '<div class="path-card path-card-end">aliquid commodi.</div>' : "";
  return `${back}<div class="path-title">Learn Path Name</div>
    <div class="path-sheet">${tail}${pathCard}${pathCard}${pathCard}</div>`;
}

const trashEmpty = `<div class="big-title list-title">Trash</div>${listBar}
  <div class="sheet sheet-gap trash-sheet">${icon("t-trash", "trash-ico")}</div>`;

function searchPage(text, n, ico, chipOn) {
  const hint = text === "Search here" ? " search-hint" : "";
  const chips = `<div class="chips">
    <span class="chip${chipOn === 0 ? " chip-on" : ""}">Transcripts</span>
    <span class="chip${chipOn === 1 ? " chip-on" : ""}">Learn Paths</span></div>`;
  return `${back}<div class="search-row"><span class="${hint}">${text}</span>${icon("t-search")}</div>${chips}
    <div class="sheet search-sheet">${cards(n, ico)}</div>`;
}

function keyRow(keys) {
  return '<div class="kbd-row">' + keys.map(k => {
    const cls = { "⇧": " key-mod", "⌫": " key-mod", "?123": " key-fn", "space": " key-space", "go": " key-enter" }[k] || "";
    return `<span class="key${cls}">${k === "space" ? "" : k}</span>`;
  }).join("") + "</div>";
}

const keyboard = `<div class="kbd-tools"><i class="kbd-first"></i><i></i><i></i><i></i><i></i><i></i><i></i></div>
  ${keyRow("qwertyuiop".split(""))}${keyRow("asdfghjkl".split(""))}
  ${keyRow(["⇧", ..."zxcvbnm".split(""), "⌫"])}${keyRow(["?123", ",", "☺", "space", ".", "go"])}`;

const footer = ["Gallery", "Library", "Device"].map(n =>
  `<div class="footer-item">${icon("t-doc")}${n}</div>`).join("");

const loading = '<div class="preview-body"><div class="logo-title">Sidebar</div><div class="logo-pill">By UXpress</div></div>';

const frames = [
  [273, 118, loading],
  [353.5, 118, homePage("Sidebar", 4, 4)],
  [433.5, 118, homePage("Folder Name", 2, 3, true)],

  [353.5, 292, docPage("", startBtn, false, true)],
  [433.5, 292, docPage(paper(), pauseStop, false, true)],
  [514, 292, docPage(paper("mark"), pauseStop, false, true)],
  [594, 292, explanation, "thumb-grey"],
  [674, 292, docPage(paper("strong"), pauseStop, false, true)],
  [754, 292, docPage(paper("strong"), startBtn)],
  [834.5, 292, docPage("", summarizeBtn, true)],
  [915, 292, docPage(summary, summarizeBtn, true)],

  [353.5, 479.5, navigation, "nav-thumb"],
  [433.5, 465.5, listPage("All Transcripts", 7, "t-doc", "+ Create")],
  [514, 465.5, listPage("Learn Paths", 8, "t-book", "", "sheet-path")],
  [594, 465.5, listPage("Favorites", 7, "t-star", "+ Create")],
  [674.5, 465.5, listPage("Trash", 7, "t-doc", "Empty")],
  [754.5, 465.5, about],

  [433.5, 639, pathPage(false)],
  [514, 639, pathPage(true)],
  [674.5, 639, trashEmpty],
  [353.5, 786, footer, "footer-thumb"],

  [353.5, 813, searchPage("Search here", 0, "t-doc", -1)],
  [433.5, 813, searchPage("Medical Assistant", 0, "t-doc", -1)],
  [514, 813, searchPage("Medical Assistant", 8, "t-doc", -1)],
  [594, 813, searchPage("Medical Assistant", 5, "t-doc", 0)],
  [674.5, 813, searchPage("Medical Assistant", 3, "t-book", 1)],

  [433.5, 982, keyboard, "kbd-thumb"]
];

const labels = [
  [273, 103, "Loading Pa...", "label-on"],
  [353.5, 103, "Home Page"], [433.5, 103, "Home Pag..."],
  [353.5, 277, "New Docu..."], [433.5, 277, "New Docu..."], [514, 277, "New Docu..."], [594, 277, "New Docu..."],
  [674, 277, "New Docu..."], [754, 277, "New Docu..."], [834.5, 277, "New Docu..."], [915, 277, "New Docu..."],
  [353.5, 450, "Navigation..."], [433.5, 450, "All Transcr..."], [514, 450, "All Learn P..."], [594, 450, "All Favorit..."],
  [674.5, 450, "Trash Page"], [754.5, 450, "About Page"],
  [433.5, 624, "Learn Path..."], [514, 624, "Learn Path..."], [674.5, 624, "Trash Page"],
  [353.5, 798, "Search Pa..."], [433.5, 798, "Search Pa..."], [514, 798, "Search Pa..."], [594, 798, "Search Pa..."], [674.5, 798, "Search Pa..."],
  [433.5, 967, "Keyboard"]
];

frames.forEach(([x, y, html, cls]) => {
  const el = document.createElement("div");
  el.className = "thumb " + (cls || "");
  el.style.left = x - ORIGIN_X + "px";
  el.style.top = y - ORIGIN_Y + "px";
  el.innerHTML = html;
  canvas.insertBefore(el, selection);
});

labels.forEach(([x, y, text, cls]) => {
  const el = document.createElement("div");
  el.className = "label " + (cls || "");
  el.style.left = x - ORIGIN_X + "px";
  el.style.top = y - ORIGIN_Y + "px";
  el.textContent = text;
  canvas.insertBefore(el, selection);
});
```
